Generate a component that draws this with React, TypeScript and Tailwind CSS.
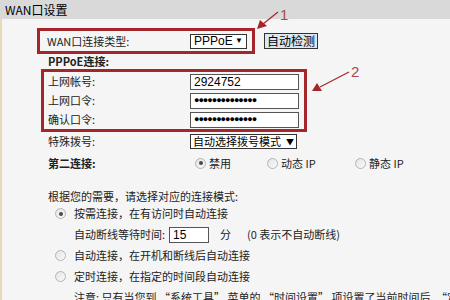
import React from 'react'

const FONT = '"Noto Sans CJK SC", "Liberation Sans", sans-serif'

function Radio({ checked }: { checked?: boolean }) {
  return (
    <span className="inline-flex h-[11px] w-[11px] items-center justify-center rounded-full border border-[#b4b4b4] bg-gradient-to-br from-[#e4e4e4] to-[#fafafa]">
      {checked && <span className="h-[4px] w-[4px] rounded-full bg-[#4a4a4a]" />}
    </span>
  )
}

function TextBox({ value, width, dots }: { value: string; width: string; dots?: boolean }) {
  return (
    <div
      className={`flex h-[16px] items-center border border-[#555] bg-white pl-[3px] text-[12px] text-black ${width}`}
      style={{ fontFamily: '"Liberation Sans", Arial, sans-serif' }}
    >
      {dots ? <span className="text-[9px] tracking-[-1px]">{value}</span> : value}
    </div>
  )
}

function Row({ label, children, bold }: { label: string; children?: React.ReactNode; bold?: boolean }) {
  return (
    <div className="flex h-[19px] items-center">
      <span className={`w-[142px] shrink-0 ${bold ? 'font-bold' : ''}`}>{label}</span>
      {children}
    </div>
  )
}

export default function App() {
  return (
    <div
      className="relative h-[300px] w-[450px] overflow-hidden bg-[#f5f5f5] text-[11px] text-[#222]"
      style={{ fontFamily: FONT }}
    >
      <div className="flex h-[19px] items-center bg-[#d9d9d9] pl-[5px] text-[12px] text-black">
        WAN口设置
      </div>

      <div className="h-[281px] border-l-2 border-[#e6d9b4]">
        {/* connection type */}
        <div className="flex items-center pt-[9px] pl-[35px]">
          <div className="flex h-[26px] items-center border-[3px] border-[#a3262b] pl-[7px] pr-[5px]">
            <span className="w-[143px]">WAN口连接类型:</span>
            <div
              className="flex h-[15px] w-[57px] items-center justify-between border border-[#333] bg-white px-[3px] text-[12px] text-black"
              style={{ fontFamily: '"Liberation Sans", Arial, sans-serif' }}
            >
              <span>PPPoE</span>
              <span className="text-[8px]">▼</span>
            </div>
          </div>
          <button className="ml-[9px] flex h-[16px] w-[54px] items-center justify-center border border-[#333] bg-[#dbe7f3] text-[12px] text-black">
            自动检测
          </button>
        </div>

        <div className="flex h-[15px] items-center pl-[46px] font-bold">PPPoE连接:</div>

        {/* account box */}
        <div className="pl-[39px]">
          <div className="w-[266px] border-[3px] border-[#a3262b] pl-[4px] pr-[5px]">
            <Row label="上网帐号:">
              <TextBox value="2924752" width="w-[109px]" />
            </Row>
            <Row label="上网口令:">
              <TextBox value="●●●●●●●●●●●●●●" width="w-[109px]" dots />
            </Row>
            <Row label="确认口令:">
              <TextBox value="●●●●●●●●●●●●●●" width="w-[109px]" dots />
            </Row>
          </div>
        </div>

        <div className="pl-[46px]">
          <Row label="特殊拨号:">
            <div className="flex h-[15px] w-[107px] items-center justify-between border border-[#333] bg-white px-[2px] text-[11px] text-black">
              <span>自动选择拨号模式</span>
              <span className="text-[8px]">▼</span>
            </div>
          </Row>

          <div className="flex h-[24px] items-center">
            <span className="w-[147px] shrink-0 font-bold">第二连接:</span>
            <div className="flex w-[72px] items-center gap-[3px]">
              <Radio checked />
              <span>禁用</span>
            </div>
            <div className="flex w-[88px] items-center gap-[3px]">
              <Radio />
              <span>动态 IP</span>
            </div>
            <div className="flex items-center gap-[3px]">
              <Radio />
              <span>静态 IP</span>
            </div>
          </div>

          <div className="mt-[14px] flex h-[14px] items-center">根据您的需要，请选择对应的连接模式:</div>

          <div className="pl-[7px]">
            <div className="flex h-[21px] items-center gap-[8px]">
              <Radio checked />
              <span>按需连接，在有访问时自动连接</span>
            </div>
            <div className="flex h-[21px] items-center pl-[19px]">
              <span className="w-[95px]">自动断线等待时间:</span>
              <TextBox value="15" width="w-[40px]" />
              <span className="ml-[11px] w-[27px]">分</span>
              <span>(0 表示不自动断线)</span>
            </div>
            <div className="flex h-[21px] items-center gap-[8px]">
              <Radio />
              <span>自动连接，在开机和断线后自动连接</span>
            </div>
            <div className="flex h-[21px] items-center gap-[8px]">
              <Radio />
              <span>定时连接，在指定的时间段自动连接</span>
            </div>
            <div className="flex h-[21px] items-center pl-[19px] whitespace-nowrap">
              注意: 只有当您到 “系统工具” 菜单的 “时间设置” 项设置了当前时间后, “定
            </div>
          </div>
        </div>
      </div>

      {/* annotation arrows */}
      <svg className="pointer-events-none absolute left-0 top-0" width="450" height="300">
        <line x1="278" y1="12" x2="263" y2="24" stroke="#a3262b" strokeWidth="1.2" />
        <polygon points="257,29 260,20 267,26" fill="#a3262b" />
        <line x1="349" y1="72" x2="320" y2="87" stroke="#a3262b" strokeWidth="1.2" />
        <polygon points="312,91 317,83 322,91" fill="#a3262b" />
      </svg>
      <span
        className="absolute left-[280px] top-[7px] text-[15px] leading-none text-[#a84a4a]"
        style={{ fontFamily: '"Liberation Sans", Arial, sans-serif' }}
      >
        1
      </span>
      <span
        className="absolute left-[351px] top-[64px] text-[15px] leading-none text-[#a84a4a]"
        style={{ fontFamily: '"Liberation Sans", Arial, sans-serif' }}
      >
        2
      </span>
    </div>
  )
}
